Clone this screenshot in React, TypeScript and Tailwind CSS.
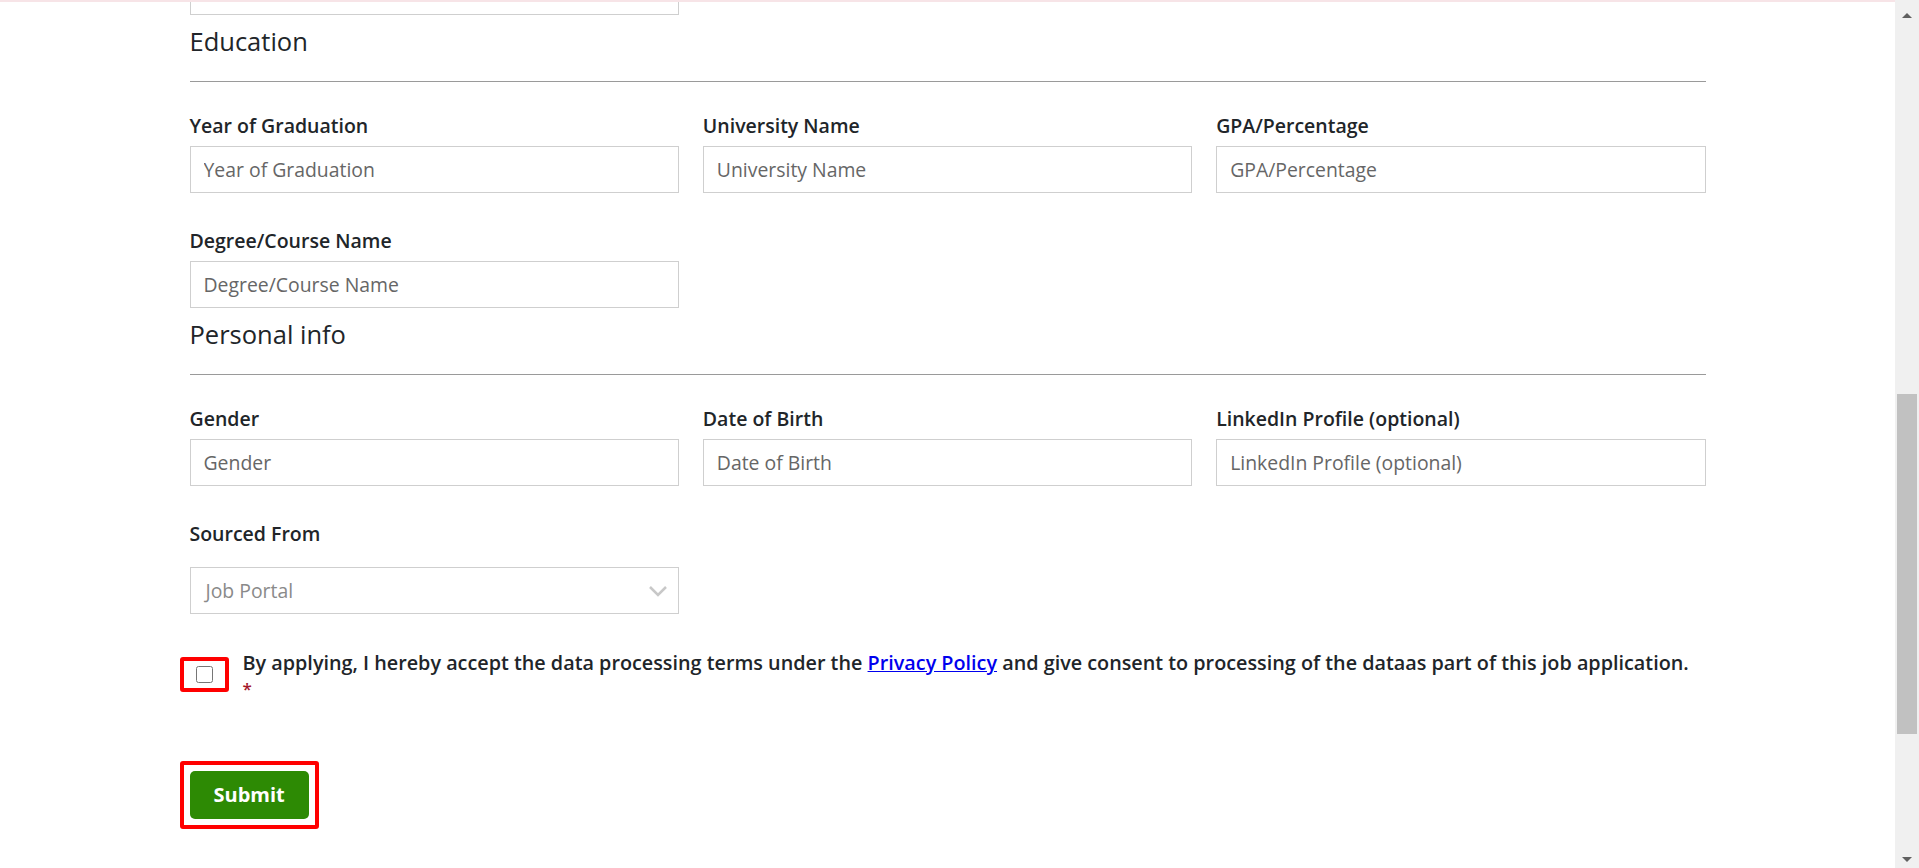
import React from 'react';

const font = { fontFamily: '"Open Sans", "Noto Sans", sans-serif' };

function Field({ label, placeholder }: { label: string; placeholder: string }) {
  return (
    <div>
      <label className="block text-[19.5px] leading-[26px] font-semibold text-[#212529] mb-[7px]">{label}</label>
      <input
        placeholder={placeholder}
        className="block w-full h-[47px] border border-[#cfcfcf] px-[13px] text-[19.4px] text-[#212529] placeholder:text-[#666] outline-none"
      />
    </div>
  );
}

function SectionTitle({ title }: { title: string }) {
  return (
    <>
      <h4 className="mt-[11px] text-[25.5px] leading-[31px] font-normal text-[#212529]">{title}</h4>
      <hr className="mt-[24px] mb-[31px] border-0 border-t border-[#9a9a9a]" />
    </>
  );
}

export default function App() {
  return (
    <div className="flex h-[868px] overflow-hidden bg-white" style={font}>
      <div className="flex-1 border-t-2 border-[#f7e4e7]">
        <div className="w-[1516px] mx-auto">
          {/* tail of the field above */}
          <div className="w-[489px] h-[13px] border-x border-b border-[#cfcfcf]" />

          <SectionTitle title="Education" />
          <div className="grid grid-cols-3 gap-x-[24px] gap-y-[35px]">
            <Field label="Year of Graduation" placeholder="Year of Graduation" />
            <Field label="University Name" placeholder="University Name" />
            <Field label="GPA/Percentage" placeholder="GPA/Percentage" />
            <Field label="Degree/Course Name" placeholder="Degree/Course Name" />
          </div>

          <SectionTitle title="Personal info" />
          <div className="grid grid-cols-3 gap-x-[24px] gap-y-[35px]">
            <Field label="Gender" placeholder="Gender" />
            <Field label="Date of Birth" placeholder="Date of Birth" />
            <Field label="LinkedIn Profile (optional)" placeholder="LinkedIn Profile (optional)" />
            <div>
              <label className="block text-[19.5px] leading-[26px] font-semibold text-[#212529] mb-[20px]">Sourced From</label>
              <div className="flex items-center justify-between h-[47px] border border-[#cfcfcf] pl-[15px] pr-[10px]">
                <span className="text-[19.4px] text-[#8a8a8a]">Job Portal</span>
                <svg width="20" height="12" viewBox="0 0 20 12" fill="none">
                  <path d="M2 2l8 8 8-8" stroke="#c8c8c8" strokeWidth="2.5" />
                </svg>
              </div>
            </div>
          </div>

          <div className="flex items-start mt-[35px] -ml-[10px]">
            <div className="mt-[8px] w-[49px] h-[35px] border-4 border-[#ff0000] rounded-[3px] flex items-center justify-center">
              <input type="checkbox" className="w-[17px] h-[17px] accent-gray-500" />
            </div>
            <div className="ml-[14px] mt-[1px] text-[19.8px] leading-[26px] font-semibold text-[#212529]">
              <p className="whitespace-nowrap">
                By applying, I hereby accept the data processing terms under the{' '}
                <a href="#" className="text-[#0000ee] underline">Privacy Policy</a> and give consent to processing of the dataas part of this job application.
              </p>
              <p className="text-[#a3182b] text-[17px]">*</p>
            </div>
          </div>

          <div className="mt-[59px] -ml-[10px] inline-block border-4 border-[#ff0000] rounded-[3px] p-[6px]">
            <button className="h-[48px] px-[24px] rounded-[5px] bg-[#2d8a04] text-white text-[20px] font-bold">Submit</button>
          </div>
        </div>
      </div>

      {/* scrollbar */}
      <div className="w-[24px] bg-[#f0f0f0] flex flex-col items-center">
        <svg width="12" height="24" viewBox="0 0 12 24" className="mt-[2px]">
          <path d="M1 16l5-5 5 5z" fill="#606060" />
        </svg>
        <div className="mt-[368px] w-[20px] h-[340px] bg-[#c1c1c1]" />
        <div className="flex-1" />
        <svg width="12" height="12" viewBox="0 0 12 12" className="mb-[2px]">
          <path d="M1 3l5 5 5-5z" fill="#606060" />
        </svg>
      </div>
    </div>
  );
}
